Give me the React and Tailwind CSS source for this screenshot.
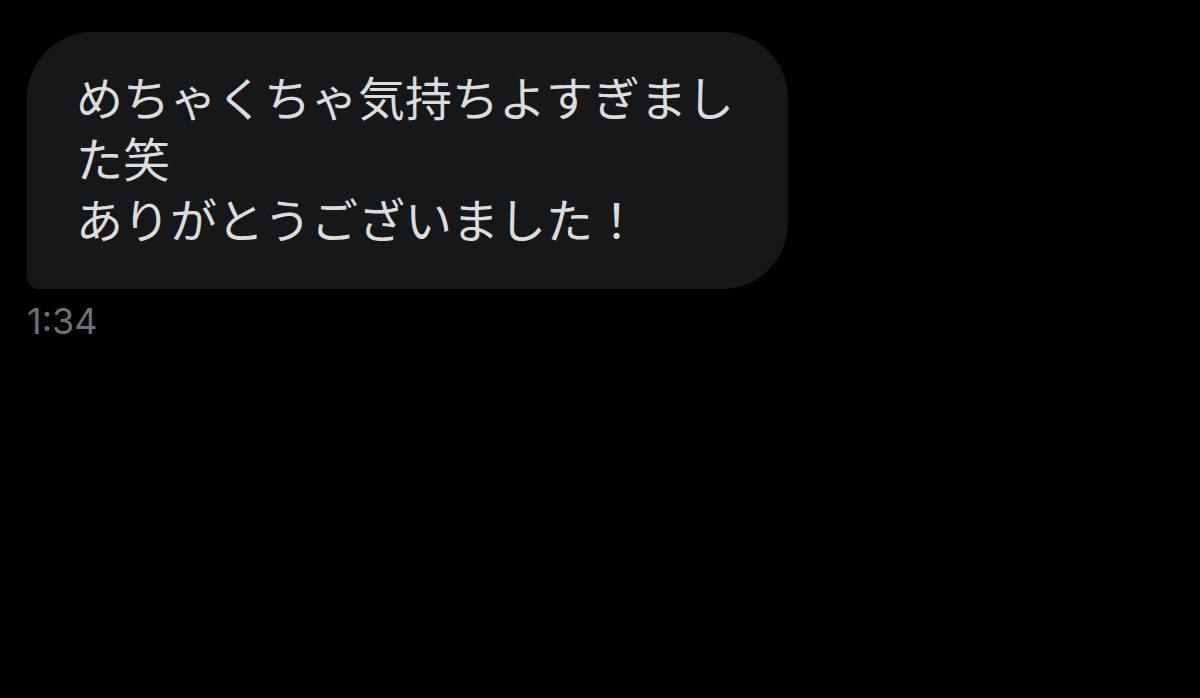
const messages = [
  {
    id: 1,
    lines: ['めちゃくちゃ気持ちよすぎまし', 'た笑', 'ありがとうございました！'],
    time: '1:34',
  },
];

function Message({ message }) {
  return (
    <li className="flex flex-col items-start">
      <p className="rounded-[66px] rounded-bl-xl bg-[#151718] pt-9 pr-[54px] pb-[38px] pl-[49px] text-[47px] leading-[61px] text-[#dcdcdd]">
        {message.lines.map(line => (
          <span key={line} className="block">{line}</span>
        ))}
      </p>
      <time className="mt-3 text-[36px] leading-10 text-[#6f7076]">{message.time}</time>
    </li>
  );
}

export default function App() {
  return (
    <main
      className="min-h-screen bg-black px-[27px] py-8"
      style={{ fontFamily: "Inter, 'Noto Sans CJK JP', sans-serif" }}
    >
      <ul className="flex flex-col gap-6" lang="ja">
        {messages.map(message => (
          <Message key={message.id} message={message} />
        ))}
      </ul>
    </main>
  );
}
